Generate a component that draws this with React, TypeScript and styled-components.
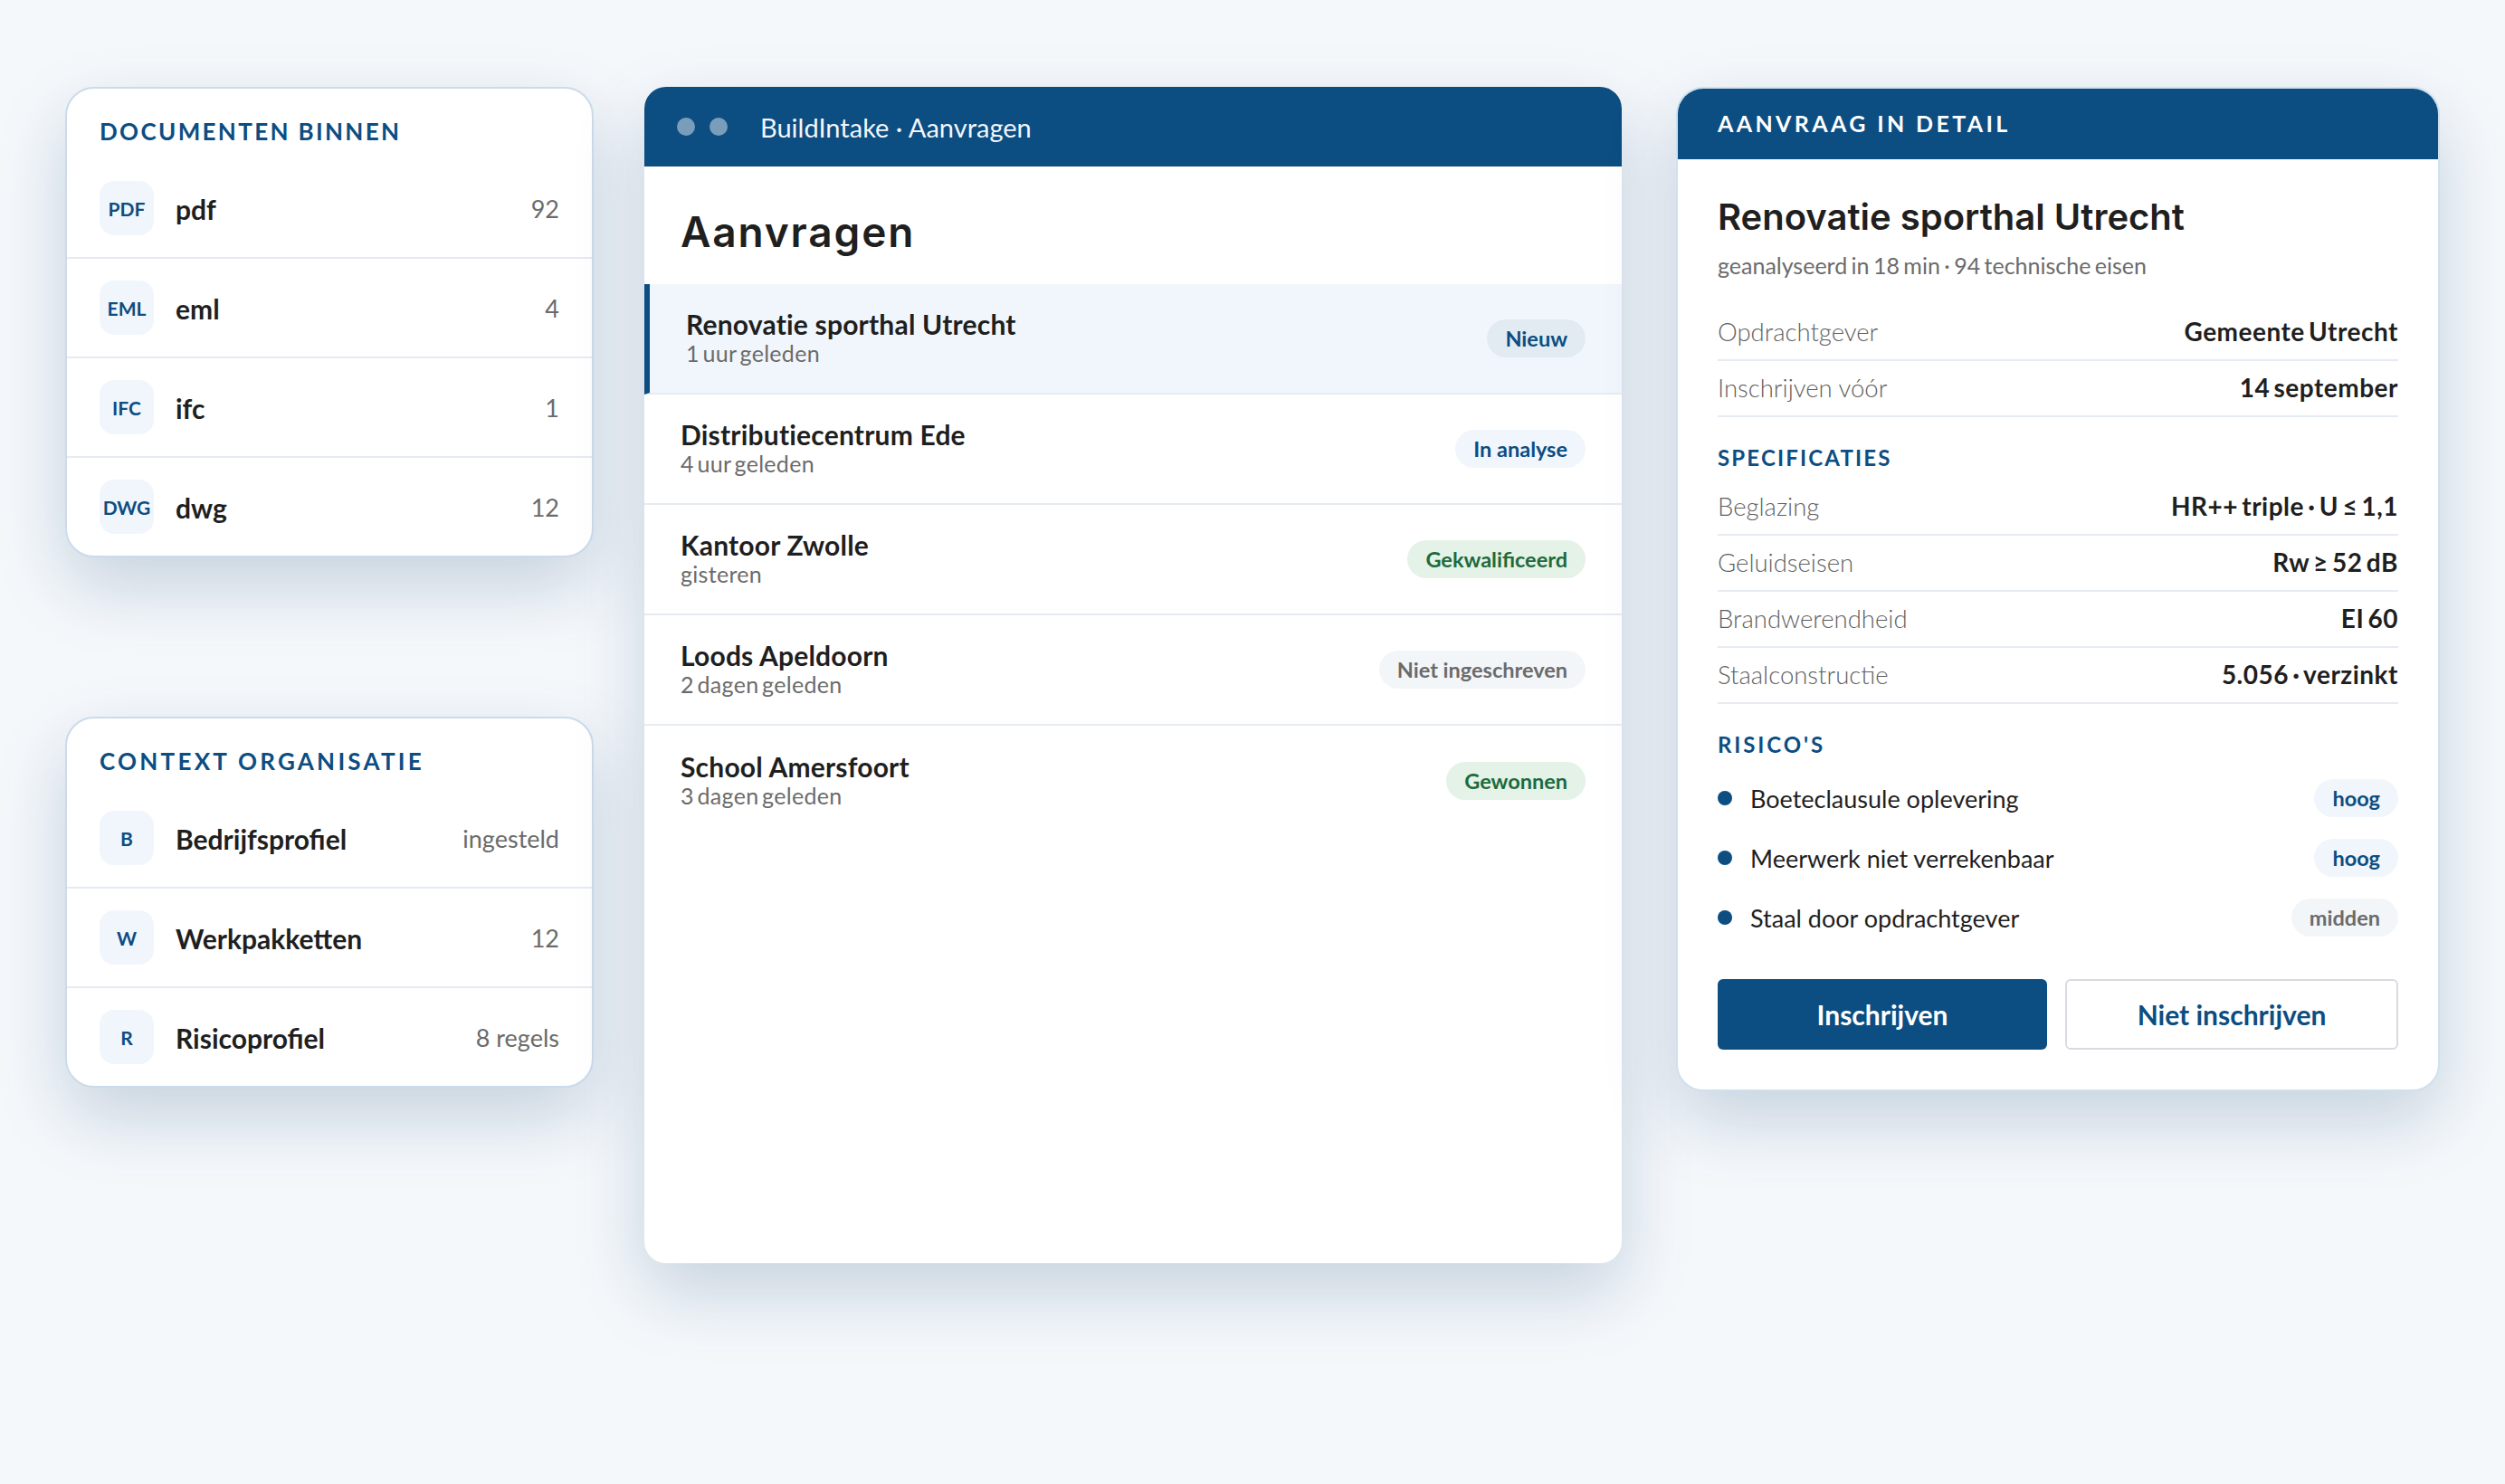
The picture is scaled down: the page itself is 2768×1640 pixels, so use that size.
import React from "react";
import styled, { createGlobalStyle } from "styled-components";

const blue = "#0c4d82";
const ink = "#1f1f1f";
const muted = "#6b6b6b";
const line = "#e6ebf1";
const cardShadow = "0 32px 80px rgba(12, 60, 110, 0.2)";

type Tone = "strong" | "blue" | "green" | "grey";

const documents = [
  { code: "PDF", name: "pdf", value: "92" },
  { code: "EML", name: "eml", value: "4" },
  { code: "IFC", name: "ifc", value: "1" },
  { code: "DWG", name: "dwg", value: "12" },
];

const context = [
  { code: "B", name: "Bedrijfsprofiel", value: "ingesteld" },
  { code: "W", name: "Werkpakketten", value: "12" },
  { code: "R", name: "Risicoprofiel", value: "8 regels" },
];

const requests: { title: string; age: string; status: string; tone: Tone; active?: boolean }[] = [
  { title: "Renovatie sporthal Utrecht", age: "1 uur geleden", status: "Nieuw", tone: "strong", active: true },
  { title: "Distributiecentrum Ede", age: "4 uur geleden", status: "In analyse", tone: "blue" },
  { title: "Kantoor Zwolle", age: "gisteren", status: "Gekwalificeerd", tone: "green" },
  { title: "Loods Apeldoorn", age: "2 dagen geleden", status: "Niet ingeschreven", tone: "grey" },
  { title: "School Amersfoort", age: "3 dagen geleden", status: "Gewonnen", tone: "green" },
];

const facts = [
  { label: "Opdrachtgever", value: "Gemeente Utrecht" },
  { label: "Inschrijven vóór", value: "14 september" },
];

const specs = [
  { label: "Beglazing", value: "HR++ triple · U ≤ 1,1" },
  { label: "Geluidseisen", value: "Rw ≥ 52 dB" },
  { label: "Brandwerendheid", value: "EI 60" },
  { label: "Staalconstructie", value: "5.056 · verzinkt" },
];

const risks: { label: string; level: string; tone: Tone }[] = [
  { label: "Boeteclausule oplevering", level: "hoog", tone: "blue" },
  { label: "Meerwerk niet verrekenbaar", level: "hoog", tone: "blue" },
  { label: "Staal door opdrachtgever", level: "midden", tone: "grey" },
];

const pillColors: Record<Tone, { bg: string; fg: string }> = {
  strong: { bg: "#e2ebf2", fg: blue },
  blue: { bg: "#f1f6fc", fg: blue },
  green: { bg: "#e4f2e7", fg: "#1c6b3c" },
  grey: { bg: "#f3f6f9", fg: muted },
};

export default function App() {
  return (
    <Page>
      <GlobalStyle />
      <LeftColumn>
        <SideCard>
          <SideTitle $spacing="0.09em">Documenten binnen</SideTitle>
          {documents.map((d) => (
            <SideRow key={d.code}>
              <Badge>{d.code}</Badge>
              <SideName>{d.name}</SideName>
              <SideValue>{d.value}</SideValue>
            </SideRow>
          ))}
        </SideCard>
        <SideCard>
          <SideTitle $spacing="0.125em">Context organisatie</SideTitle>
          {context.map((c) => (
            <SideRow key={c.code}>
              <Badge>{c.code}</Badge>
              <SideName>{c.name}</SideName>
              <SideValue>{c.value}</SideValue>
            </SideRow>
          ))}
        </SideCard>
      </LeftColumn>

      <ListWindow>
        <WindowBar>
          <Dot />
          <Dot />
          <WindowTitle>BuildIntake · Aanvragen</WindowTitle>
        </WindowBar>
        <ListHeading>Aanvragen</ListHeading>
        {requests.map((r) => (
          <RequestRow key={r.title} $active={r.active}>
            <RequestText>
              <RequestTitle>{r.title}</RequestTitle>
              <RequestAge>{r.age}</RequestAge>
            </RequestText>
            <Pill $tone={r.tone}>{r.status}</Pill>
          </RequestRow>
        ))}
      </ListWindow>

      <DetailCard>
        <DetailBar>Aanvraag in detail</DetailBar>
        <DetailBody>
          <DetailTitle>Renovatie sporthal Utrecht</DetailTitle>
          <DetailSub>geanalyseerd in 18 min · 94 technische eisen</DetailSub>
          <FactList>
            {facts.map((f) => (
              <FactRow key={f.label}>
                <FactLabel>{f.label}</FactLabel>
                <FactValue>{f.value}</FactValue>
              </FactRow>
            ))}
          </FactList>
          <SectionTitle $spacing="0.09em">Specificaties</SectionTitle>
          {specs.map((s) => (
            <FactRow key={s.label}>
              <FactLabel>{s.label}</FactLabel>
              <FactValue>{s.value}</FactValue>
            </FactRow>
          ))}
          <SectionTitle $spacing="0.12em">Risico's</SectionTitle>
          <RiskList>
            {risks.map((r) => (
              <RiskRow key={r.label}>
                <RiskDot />
                <RiskLabel>{r.label}</RiskLabel>
                <Pill $tone={r.tone}>{r.level}</Pill>
              </RiskRow>
            ))}
          </RiskList>
          <Actions>
            <PrimaryButton>Inschrijven</PrimaryButton>
            <SecondaryButton>Niet inschrijven</SecondaryButton>
          </Actions>
        </DetailBody>
      </DetailCard>
    </Page>
  );
}

const GlobalStyle = createGlobalStyle`
  html, body {
    margin: 0;
    padding: 0;
    background: #f5f8fb;
  }
  * {
    box-sizing: border-box;
  }
`;

const Page = styled.div`
  width: 2768px;
  height: 1640px;
  padding: 96px 72px 0;
  display: flex;
  align-items: flex-start;
  background: #f5f8fb;
  font-family: "Lato", "Liberation Sans", sans-serif;
  color: ${ink};
  overflow: hidden;
`;

const LeftColumn = styled.div`
  width: 584px;
  flex: none;
  margin-right: 56px;
  display: flex;
  flex-direction: column;
  gap: 176px;
`;

const SideCard = styled.section`
  background: #fff;
  border: 2px solid #cbdbeb;
  border-radius: 32px;
  box-shadow: ${cardShadow};
  overflow: hidden;
`;

const SideTitle = styled.h2<{ $spacing: string }>`
  height: 78px;
  margin: 0;
  padding: 31px 36px 0;
  font-size: 26px;
  line-height: 32px;
  font-weight: 700;
  letter-spacing: ${(p) => p.$spacing};
  text-transform: uppercase;
  color: ${blue};
`;

const SideRow = styled.div`
  height: 110px;
  padding: 0 36px;
  display: flex;
  align-items: center;
  gap: 24px;
  border-bottom: 2px solid ${line};
  &:last-child {
    height: 108px;
    border-bottom: none;
  }
`;

const Badge = styled.span`
  width: 60px;
  height: 60px;
  flex: none;
  display: flex;
  align-items: center;
  justify-content: center;
  border-radius: 16px;
  background: #f1f6fc;
  color: ${blue};
  font-size: 21px;
  font-weight: 700;
`;

const SideName = styled.span`
  flex: 1;
  padding-top: 2px;
  font-size: 30px;
  font-weight: 700;
`;

const SideValue = styled.span`
  font-size: 27px;
  color: ${muted};
`;

const ListWindow = styled.section`
  width: 1080px;
  height: 1300px;
  flex: none;
  margin-right: 60px;
  background: #fff;
  border-radius: 24px;
  box-shadow: ${cardShadow};
  overflow: hidden;
`;

const WindowBar = styled.header`
  height: 88px;
  padding: 0 36px;
  display: flex;
  align-items: center;
  gap: 16px;
  background: ${blue};
`;

const Dot = styled.span`
  width: 20px;
  height: 20px;
  border-radius: 50%;
  background: rgba(255, 255, 255, 0.45);
`;

const WindowTitle = styled.span`
  margin-left: 20px;
  font-size: 29px;
  color: #f2f6fa;
`;

const ListHeading = styled.h1`
  height: 130px;
  margin: 0;
  padding: 42px 40px 0;
  font-family: "Inter", "Liberation Sans", sans-serif;
  font-size: 46px;
  line-height: 60px;
  font-weight: 600;
  letter-spacing: 0.04em;
`;

const RequestRow = styled.div<{ $active?: boolean }>`
  height: 122px;
  padding: 0 40px;
  display: flex;
  align-items: center;
  justify-content: space-between;
  border-bottom: 2px solid ${line};
  border-left: ${(p) => (p.$active ? `6px solid ${blue}` : "none")};
  background: ${(p) => (p.$active ? "#f1f6fc" : "#fff")};
  &:last-child {
    border-bottom: none;
  }
`;

const RequestText = styled.div`
  padding-bottom: 4px;
  display: flex;
  flex-direction: column;
`;

const RequestTitle = styled.span`
  font-size: 30px;
  line-height: 36px;
  font-weight: 700;
  letter-spacing: 0.2px;
`;

const RequestAge = styled.span`
  font-size: 25px;
  line-height: 29px;
  letter-spacing: 0.3px;
  word-spacing: -3px;
  color: ${muted};
`;

const Pill = styled.span<{ $tone: Tone }>`
  height: 42px;
  padding: 0 20px;
  display: inline-flex;
  align-items: center;
  border-radius: 21px;
  font-size: 23.5px;
  font-weight: 700;
  background: ${(p) => pillColors[p.$tone].bg};
  color: ${(p) => pillColors[p.$tone].fg};
`;

const DetailCard = styled.section`
  width: 844px;
  height: 1110px;
  flex: none;
  background: #fff;
  border: 2px solid #cfe0ee;
  border-radius: 30px;
  box-shadow: ${cardShadow};
  overflow: hidden;
`;

const DetailBar = styled.header`
  height: 78px;
  padding: 0 44px 2px;
  display: flex;
  align-items: center;
  background: ${blue};
  color: #fff;
  font-size: 25px;
  font-weight: 700;
  letter-spacing: 0.135em;
  text-transform: uppercase;
`;

const DetailBody = styled.div`
  padding: 36px 44px 0;
`;

const DetailTitle = styled.h2`
  margin: 0;
  font-family: "Inter", "Liberation Sans", sans-serif;
  font-size: 40px;
  line-height: 56px;
  font-weight: 600;
`;

const DetailSub = styled.p`
  margin: 9px 0 0;
  font-size: 25px;
  line-height: 32px;
  word-spacing: -2px;
  color: ${muted};
`;

const FactList = styled.div`
  margin-top: 28px;
`;

const FactRow = styled.div`
  height: 62px;
  padding-bottom: 2px;
  display: flex;
  align-items: center;
  justify-content: space-between;
  border-bottom: 2px solid ${line};
`;

const FactLabel = styled.span`
  font-size: 27.5px;
  font-weight: 300;
  color: #5f5f5f;
`;

const FactValue = styled.span`
  font-size: 28px;
  font-weight: 700;
  letter-spacing: 0.5px;
  word-spacing: -3px;
`;

const SectionTitle = styled.h3<{ $spacing: string }>`
  margin: 30px 0 9px;
  font-size: 24px;
  line-height: 30px;
  font-weight: 700;
  letter-spacing: ${(p) => p.$spacing};
  text-transform: uppercase;
  color: ${blue};
`;

const RiskList = styled.div`
  margin-top: 11px;
`;

const RiskRow = styled.div`
  height: 66px;
  display: flex;
  align-items: center;
  gap: 20px;
`;

const RiskDot = styled.span`
  width: 16px;
  height: 16px;
  flex: none;
  border-radius: 50%;
  background: ${blue};
`;

const RiskLabel = styled.span`
  flex: 1;
  font-size: 27px;
`;

const Actions = styled.div`
  margin-top: 35px;
  display: flex;
  gap: 20px;
`;

const PrimaryButton = styled.button`
  flex: 1;
  height: 78px;
  border: none;
  border-radius: 6px;
  background: ${blue};
  color: #fff;
  font-family: inherit;
  font-size: 30px;
  font-weight: 700;
`;

const SecondaryButton = styled(PrimaryButton)`
  border: 2px solid #d8dbdf;
  background: #fff;
  color: ${blue};
`;
